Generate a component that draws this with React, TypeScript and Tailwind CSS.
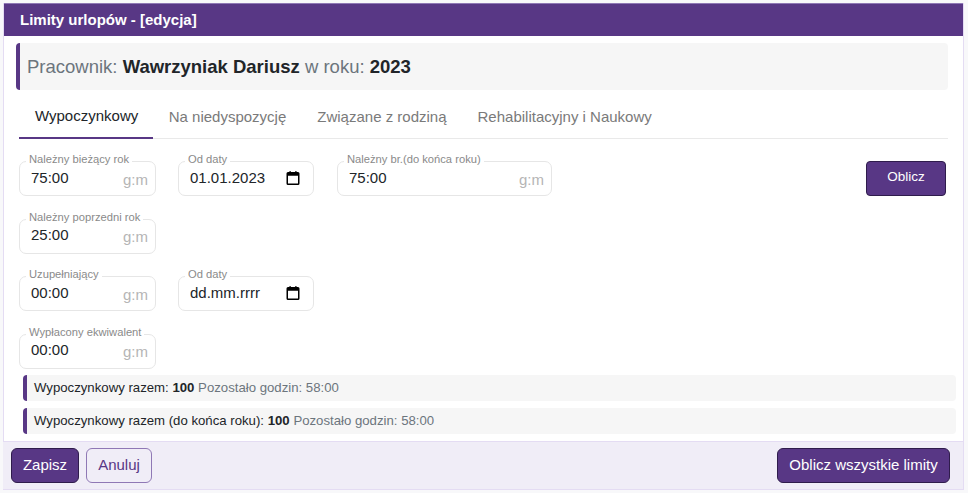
const CalendarIcon = () => (
  <svg width="14" height="14" viewBox="0 0 14 14" className="text-black">
    <path
      fill="currentColor"
      d="M2 1h1.5V0h1.2v1h4.6V0h1.2v1H12a1.5 1.5 0 0 1 1.5 1.5v10A1.5 1.5 0 0 1 12 14H2a1.5 1.5 0 0 1-1.5-1.5v-10A1.5 1.5 0 0 1 2 1Zm0 3.8v7.4c0 .3.1.4.4.4h9.2c.3 0 .4-.1.4-.4V4.800Z"
    />
  </svg>
);

type FieldProps = {
  label: string;
  value: string;
  width?: string;
  date?: boolean;
};

const Field = ({ label, value, width = "w-[137px]", date }: FieldProps) => (
  <div className={`relative h-[35px] ${width} rounded-[7px] border border-[#e6e6e6] bg-white flex items-center pl-[11px] pr-[7px]`}>
    <span className="absolute left-[6px] -top-[9px] bg-white px-[3px] text-[11.2px] leading-[12px] text-[#8a8a8a]">
      {label}
    </span>
    <span className="text-[15px] leading-[20px] text-[#212529] -mt-[2px]">{value}</span>
    <span className="ml-auto flex items-center">
      {date ? (
        <span className="mr-[6px] -mt-[2px]">
          <CalendarIcon />
        </span>
      ) : (
        <span className="text-[15px] text-[#b5b5b5] mt-[3px]">g:m</span>
      )}
    </span>
  </div>
);

const Summary = ({ text, value, rest }: { text: string; value: string; rest: string }) => (
  <div className="h-[26px] flex items-center rounded-[4px] border-l-[4px] border-[#583785] bg-[#f6f6f6] pl-[7px] text-[13.2px] text-[#212529]">
    {text}&nbsp;<b>{value}</b>&nbsp;<span className="text-[#6c757d]">{rest}</span>
  </div>
);

const tabs = ["Wypoczynkowy", "Na niedyspozycję", "Związane z rodziną", "Rehabilitacyjny i Naukowy"];

const App = () => {
  return (
    <div className="h-[493px] w-[968px] bg-[#f8f8fa] pt-[3px] pb-[3px] pl-[3px] pr-[4px] font-['Liberation_Sans',Arial,sans-serif] overflow-hidden">
      <div className="h-full flex flex-col border-x border-[#e4dcf3] bg-white">
        <div className="h-[33px] shrink-0 bg-[#583785] border-t border-[#8f78b5] flex items-center pl-[16px] text-[15px] font-bold text-white">
          Limity urlopów - [edycja]
        </div>

        <div className="flex-1 pl-[12px] pr-[7px] pt-[7px]">
          <div className="mr-[8px] h-[47px] flex items-center rounded-[4px] border-l-[4px] border-[#583785] bg-[#f6f6f6] pl-[7px] text-[18.5px] text-[#6c757d]">
            Pracownik:&nbsp;<b className="text-[#212529]">Wawrzyniak Dariusz</b>&nbsp;w roku:&nbsp;
            <b className="text-[#212529]">2023</b>
          </div>

          <div className="mt-[7px] mr-[8px] ml-[3px] h-[42px] flex border-b border-[#e9e9e9]">
            {tabs.map((tab, i) => (
              <div
                key={tab}
                className={`h-[42px] pb-[2px] flex items-center text-[15px] ${
                  i == 0
                    ? "pl-[16px] pr-[15px] border-b-[2px] border-[#583785] text-[#212529]"
                    : "px-[15.5px] text-[#7a7a7a]"
                }`}
              >
                {tab}
              </div>
            ))}
          </div>

          <div className="mt-[22px] ml-[3px] flex flex-col gap-[22.5px]">
            <div className="flex">
              <Field label="Należny bieżący rok" value="75:00" />
              <div className="ml-[22px]">
                <Field label="Od daty" value="01.01.2023" width="w-[136px]" date />
              </div>
              <div className="ml-[23px]">
                <Field label="Należny br.(do końca roku)" value="75:00" width="w-[215px]" />
              </div>
              <button className="ml-[314px] h-[35px] w-[80px] rounded-[4px] border border-[#2f1c4c] bg-[#583785] pb-[2px] text-[13.5px] text-white">
                Oblicz
              </button>
            </div>
            <div className="flex">
              <Field label="Należny poprzedni rok" value="25:00" />
            </div>
            <div className="flex">
              <Field label="Uzupełniający" value="00:00" />
              <div className="ml-[22px]">
                <Field label="Od daty" value="dd.mm.rrrr" width="w-[136px]" date />
              </div>
            </div>
            <div className="flex">
              <Field label="Wypłacony ekwiwalent" value="00:00" />
            </div>
          </div>

          <div className="mt-[6.5px] ml-[7px] flex flex-col gap-[7px]">
            <Summary text="Wypoczynkowy razem:" value="100" rest="Pozostało godzin: 58:00" />
            <Summary text="Wypoczynkowy razem (do końca roku):" value="100" rest="Pozostało godzin: 58:00" />
          </div>
        </div>

        <div className="h-[49px] shrink-0 -ml-px flex items-center gap-[7px] border-y border-[#e4dcf3] bg-[#f0edf7] pl-[8px] pr-[13px]">
          <button className="h-[35px] w-[68px] rounded-[6px] border border-[#2f1c4c] bg-[#583785] text-[15px] text-white">
            Zapisz
          </button>
          <button className="h-[35px] w-[66px] rounded-[6px] border border-[#8f78b5] text-[15px] text-[#583785]">
            Anuluj
          </button>
          <button className="ml-auto h-[35px] w-[173px] rounded-[6px] border border-[#2f1c4c] bg-[#583785] text-[15px] text-white">
            Oblicz wszystkie limity
          </button>
        </div>
      </div>
    </div>
  );
};

export default App;
